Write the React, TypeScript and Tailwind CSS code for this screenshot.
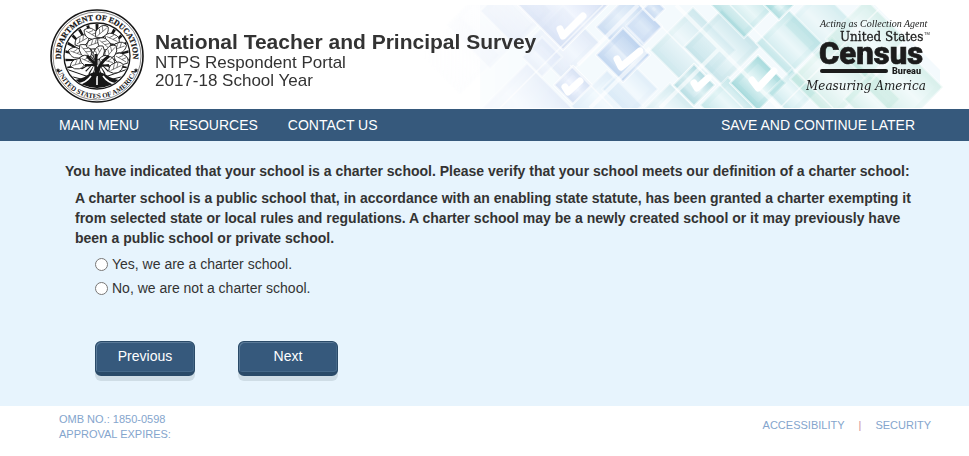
import React from "react";

type Tile = { x: number; y: number; r: number; tone: string; o: number };

/* Coordinates are in banner units; each tile is a square turned by 45 degrees. */
const tiles: Tile[] = [
  { x: -20, y: 50, r: 40, tone: "lav", o: 0.2 },
  { x: 10, y: 20, r: 44, tone: "lav", o: 0.35 },
  { x: 47, y: 108, r: 50, tone: "lav", o: 0.5 },
  { x: 36, y: 6, r: 36, tone: "lav", o: 0.6 },
  { x: 83, y: 38, r: 37, tone: "lav", o: 0.6 },
  { x: 62, y: 52, r: 20, tone: "lav", o: 0.5 },
  { x: 83, y: 0, r: 45, tone: "lav", o: 1 },
  { x: 93, y: 80, r: 19, tone: "lav", o: 1 },
  { x: 127, y: 101, r: 36, tone: "sky", o: 0.5 },
  { x: 150, y: 84, r: 28, tone: "sky", o: 0.5 },
  { x: 149, y: 22, r: 33, tone: "blue", o: 0.7 },
  { x: 143, y: 50, r: 27, tone: "blue", o: 0.85 },
  { x: 164, y: 21, r: 18, tone: "blue", o: 0.5 },
  { x: 174, y: 4, r: 11, tone: "blue", o: 0.8 },
  { x: 190, y: 108, r: 30, tone: "aqua", o: 0.5 },
  { x: 213, y: 45, r: 43, tone: "aqua", o: 0.6 },
  { x: 242, y: 42, r: 38, tone: "aqua", o: 0.7 },
  { x: 214, y: 80, r: 21, tone: "aqua", o: 1 },
  { x: 248, y: 100, r: 28, tone: "teal", o: 0.6 },
  { x: 264, y: 0, r: 33, tone: "teal", o: 0.75 },
  { x: 340, y: 20, r: 36, tone: "teal", o: 0.4 },
  { x: 309, y: 38, r: 33, tone: "teal", o: 0.6 },
  { x: 299, y: 0, r: 15, tone: "teal", o: 0.9 },
  { x: 278, y: 78, r: 28, tone: "teal", o: 1 },
  { x: 312, y: 88, r: 24, tone: "teal", o: 0.5 },
  { x: 352, y: 74, r: 42, tone: "green", o: 0.6 },
  { x: 386, y: 34, r: 40, tone: "green", o: 0.5 },
  { x: 392, y: 94, r: 28, tone: "green", o: 0.5 },
  { x: 424, y: 82, r: 39, tone: "green", o: 0.5 },
];

const tones: Record<string, [string, string]> = {
  lav: ["#f0f4fd", "#cfdaf2"],
  sky: ["#f1f8fd", "#c3dcf1"],
  blue: ["#dfeaf8", "#afc9ea"],
  aqua: ["#e9f6f8", "#aad6de"],
  teal: ["#e2f5f5", "#98d4d6"],
  green: ["#edf9f5", "#b0e0d2"],
};

const checks = [
  "M80 24 L83 31 L103 11",
  "M137 54 L141 62 L160 46",
  "M85 82 L88 87 L100 76",
  "M214 78 L217 83 L228 73",
  "M272 75 L278 83 L294 66",
];

const diamond = (x: number, y: number, r: number) =>
  `M${x} ${y - r} L${x + r} ${y} L${x} ${y + r} L${x - r} ${y} Z`;

function BannerArt() {
  return (
    <svg viewBox="-71 0 560 103" className="absolute top-[5px] right-0 h-[103px] w-[560px]" aria-hidden="true">
      <defs>
        {Object.entries(tones).map(([id, [pale, deep]]) => (
          <linearGradient key={id} id={id} x1="0.75" y1="0.25" x2="0.25" y2="0.75">
            <stop offset="0" stopColor={deep} />
            <stop offset="0.5" stopColor={pale} />
            <stop offset="1" stopColor={deep} />
          </linearGradient>
        ))}
        <linearGradient id="fade" gradientUnits="userSpaceOnUse" x1="-60" y1="0" x2="90" y2="0">
          <stop offset="0" stopColor="#000" />
          <stop offset="1" stopColor="#fff" />
        </linearGradient>
        <mask id="fadeMask" maskUnits="userSpaceOnUse" x="-71" y="0" width="560" height="103">
          <rect x="-71" y="0" width="560" height="103" fill="url(#fade)" />
        </mask>
      </defs>
      <g mask="url(#fadeMask)">
        <path d="M0 0 L395 0 L460 65 L460 85 L442 103 L0 103 Z" fill="#f4fafd" />
        {tiles.map((t, i) => (
          <g key={i} opacity={t.o}>
            <path d={diamond(t.x, t.y, t.r)} fill={`url(#${t.tone})`} fillOpacity="0.8" stroke="#fff" strokeOpacity="0.8" strokeWidth="2" />
            <path d={diamond(t.x, t.y, t.r - 4)} fill="none" stroke={tones[t.tone][1]} strokeWidth="6" opacity="0.2" />
          </g>
        ))}
        <g stroke="#fff" fill="none">
          <path d="M98 60 L158 0 M110 103 L170 43 M196 0 L299 103 M180 103 L240 43" strokeWidth="4" opacity="0.6" />
          <path d="M20 103 L123 0 M160 0 L263 103 M250 0 L353 103 M90 60 L133 103 M300 103 L403 0" strokeWidth="1.5" opacity="0.6" />
        </g>
        <g stroke="#fff" strokeWidth="7" strokeLinecap="round" strokeLinejoin="round" fill="none">
          {checks.map((d) => (
            <path key={d} d={d} />
          ))}
        </g>
      </g>
    </svg>
  );
}

const leaves = [
  [27, 45, 20], [33, 33, -30], [42, 26, 30], [53, 24, -40], [63, 31, 25], [70, 40, -20], [72, 51, 30],
  [36, 43, 50], [45, 36, -20], [55, 36, 40], [62, 44, -50], [29, 56, -15], [38, 53, 25], [50, 45, -60],
  [58, 53, 15], [67, 60, -25],
];

function Seal() {
  const rays = Array.from({ length: 24 }, (_, i) => (i * 360) / 24);
  return (
    <svg viewBox="0 0 96 96" className="h-24 w-24 shrink-0" role="img" aria-label="Department of Education seal">
      <defs>
        <path id="sealTop" d="M16.8 66 A36 36 0 1 1 79.2 66" />
        <path id="sealBottom" d="M8 62 A42.4 42.4 0 0 0 88 62" />
        <clipPath id="sealInner">
          <circle cx="48" cy="48" r="32" />
        </clipPath>
      </defs>
      <circle cx="48" cy="48" r="46" fill="#fff" stroke="#161616" strokeWidth="1.6" />
      <circle cx="48" cy="48" r="44" fill="none" stroke="#161616" strokeWidth="0.5" />
      <circle cx="48" cy="48" r="33" fill="#fff" stroke="#161616" strokeWidth="1.3" />
      <g clipPath="url(#sealInner)">
        {rays.map((a) => (
          <path key={a} d="M48 52 L46.4 14 L49.6 14 Z" fill="#161616" transform={`rotate(${a} 48 52)`} />
        ))}
        <path d="M12 62 Q30 56 40 66 L56 66 Q66 56 84 62 L84 76 L12 76 Z" fill="#fff" />
        <path d="M14 60 L40 69 M16 67 L36 72 M82 60 L56 69 M80 67 L60 72" stroke="#161616" strokeWidth="1" />
        <path d="M18 73 Q33 72 40 66 Q48 62 56 66 Q63 72 78 73 L70 84 L26 84 Z" fill="#161616" />
        <path d="M29 76 Q37 75 42 68 M67 76 Q59 75 54 68 M48 68 L48 77" stroke="#fff" strokeWidth="1.6" fill="none" />
        {leaves.map(([x, y, a], i) => (
          <g key={i} transform={`translate(${x} ${y}) rotate(${a})`}>
            <path d="M-8 0 Q-5 -6 0 -5 Q6 -6 8 0 Q5 5 0 5 Q-5 5 -8 0 Z" fill="#fff" stroke="#161616" strokeWidth="0.8" />
            <path d="M-6 0 L6 0 M-3 0 L0 -4 M1 0 L4 -4" stroke="#161616" strokeWidth="0.5" />
          </g>
        ))}
        <path d="M43 73 Q50 65 46 56 L38 48 M48 66 Q50 55 60 48 M47 57 L47 46" stroke="#161616" strokeWidth="3" fill="none" />
        <path d="M46 57 L36 57 M51 58 L60 57" stroke="#161616" strokeWidth="2" />
      </g>
      <text fontFamily="Liberation Serif, serif" fontSize="8" fontWeight="700" fill="#161616" stroke="#161616" strokeWidth="0.2" textAnchor="middle">
        <textPath href="#sealTop" startOffset="50%">DEPARTMENT OF EDUCATION</textPath>
      </text>
      <text fontFamily="Liberation Serif, serif" fontSize="7" fontWeight="700" fill="#161616" textAnchor="middle">
        <textPath href="#sealBottom" startOffset="50%">UNITED STATES OF AMERICA</textPath>
      </text>
      <path
        d="M9 60 l.7 1.5 1.6 .1 -1.2 1.1 .4 1.6 -1.5 -.9 -1.5 .9 .4 -1.6 -1.2 -1.1 1.6 -.1 Z M87 60 l.7 1.5 1.6 .1 -1.2 1.1 .4 1.6 -1.5 -.9 -1.5 .9 .4 -1.6 -1.2 -1.1 1.6 -.1 Z"
        fill="#161616"
      />
    </svg>
  );
}

function CensusLogo() {
  return (
    <svg viewBox="0 0 126 88" className="relative ml-auto h-[88px] w-[126px] shrink-0" role="img" aria-label="United States Census Bureau">
      <g fill="#1c1c1c">
        <text x="14" y="19" fontFamily="Liberation Serif, serif" fontStyle="italic" fontSize="10">Acting as Collection Agent</text>
        <text x="34" y="33" fontFamily="DejaVu Serif, serif" fontSize="12" stroke="#1c1c1c" strokeWidth="0.3">United States</text>
        <text x="118" y="27" fontFamily="Liberation Sans, sans-serif" fontSize="4">TM</text>
        <text x="13" y="56" fontFamily="Roboto, sans-serif" fontWeight="900" fontSize="31" stroke="#1c1c1c" strokeWidth="0.6">Census</text>
        <rect x="14" y="61" width="68" height="4" rx="2" />
        <text x="86" y="66" fontFamily="Roboto, sans-serif" fontWeight="900" fontSize="9">Bureau</text>
        <text x="0" y="82" fontFamily="DejaVu Serif, serif" fontStyle="italic" fontSize="12">Measuring America</text>
      </g>
    </svg>
  );
}

function NavLink({ children }: { children: React.ReactNode }) {
  return <a href="#" className="hover:underline">{children}</a>;
}

function Choice({ id, children }: { id: string; children: React.ReactNode }) {
  return (
    <div className="flex h-6 items-center gap-1">
      <input type="radio" id={id} name="charter" className="h-[13px] w-[13px]" />
      <label htmlFor={id}>{children}</label>
    </div>
  );
}

function PushButton({ children }: { children: React.ReactNode }) {
  return (
    <button
      type="button"
      className="h-[35px] w-[100px] rounded-md border border-b-4 border-[#2a4a68] bg-[#36597c] pb-[3px] text-white shadow-[0_5px_0_#cfdde6,inset_1px_1px_0_#5b7a98,inset_-1px_-1px_0_#456888]"
    >
      {children}
    </button>
  );
}

export default function App() {
  return (
    <div className="min-h-screen bg-white font-['Liberation_Sans',Arial,sans-serif] text-sm text-[#333]">
      <header className="relative flex h-[109px] items-start overflow-hidden pt-2 pr-[37px] pl-[49px]">
        <BannerArt />
        <Seal />
        <div className="relative ml-[10px] pt-[21px]">
          <h1 className="text-[21px] leading-[25px] font-bold whitespace-nowrap">National Teacher and Principal Survey</h1>
          <p className="text-[17px] leading-[18px]">NTPS Respondent Portal</p>
          <p className="text-[17px] leading-[18px]">2017-18 School Year</p>
        </div>
        <CensusLogo />
      </header>

      <nav className="flex h-8 items-center gap-[30px] bg-[#36597c] pr-[54px] pl-[59px] text-white">
        <NavLink>MAIN MENU</NavLink>
        <NavLink>RESOURCES</NavLink>
        <NavLink>CONTACT US</NavLink>
        <span className="ml-auto"><NavLink>SAVE AND CONTINUE LATER</NavLink></span>
      </nav>

      <main className="bg-[#e7f4fd] px-[52px] pt-5 pb-[30px]">
        <form>
          <fieldset>
            <legend className="pl-[13px] leading-5 font-bold">
              You have indicated that your school is a charter school. Please verify that your school meets our definition of a charter school:
            </legend>
            <p className="mt-[7px] mb-1 pl-[23px] leading-5 font-bold">
              A charter school is a public school that, in accordance with an enabling state statute, has been granted a charter exempting it from selected state or local rules and regulations. A charter school may be a newly created school or it may previously have been a public school or private school.
            </p>
            <div className="pl-[43px]">
              <Choice id="charter-yes">Yes, we are a charter school.</Choice>
              <Choice id="charter-no">No, we are not a charter school.</Choice>
            </div>
          </fieldset>
          <div className="mt-[41px] flex gap-[43px] pl-[43px]">
            <PushButton>Previous</PushButton>
            <PushButton>Next</PushButton>
          </div>
        </form>
      </main>

      <footer className="flex justify-between pt-[6px] pr-[38px] pl-[59px] text-[11px] leading-[15px] text-[#84a5cd]">
        <div>
          <p>OMB NO.: 1850-0598</p>
          <p>APPROVAL EXPIRES:</p>
        </div>
        <div className="flex gap-[14px] pt-[6px]">
          <a href="#">ACCESSIBILITY</a>
          <span className="text-[#cf8f9c]">|</span>
          <a href="#">SECURITY</a>
        </div>
      </footer>
    </div>
  );
}
